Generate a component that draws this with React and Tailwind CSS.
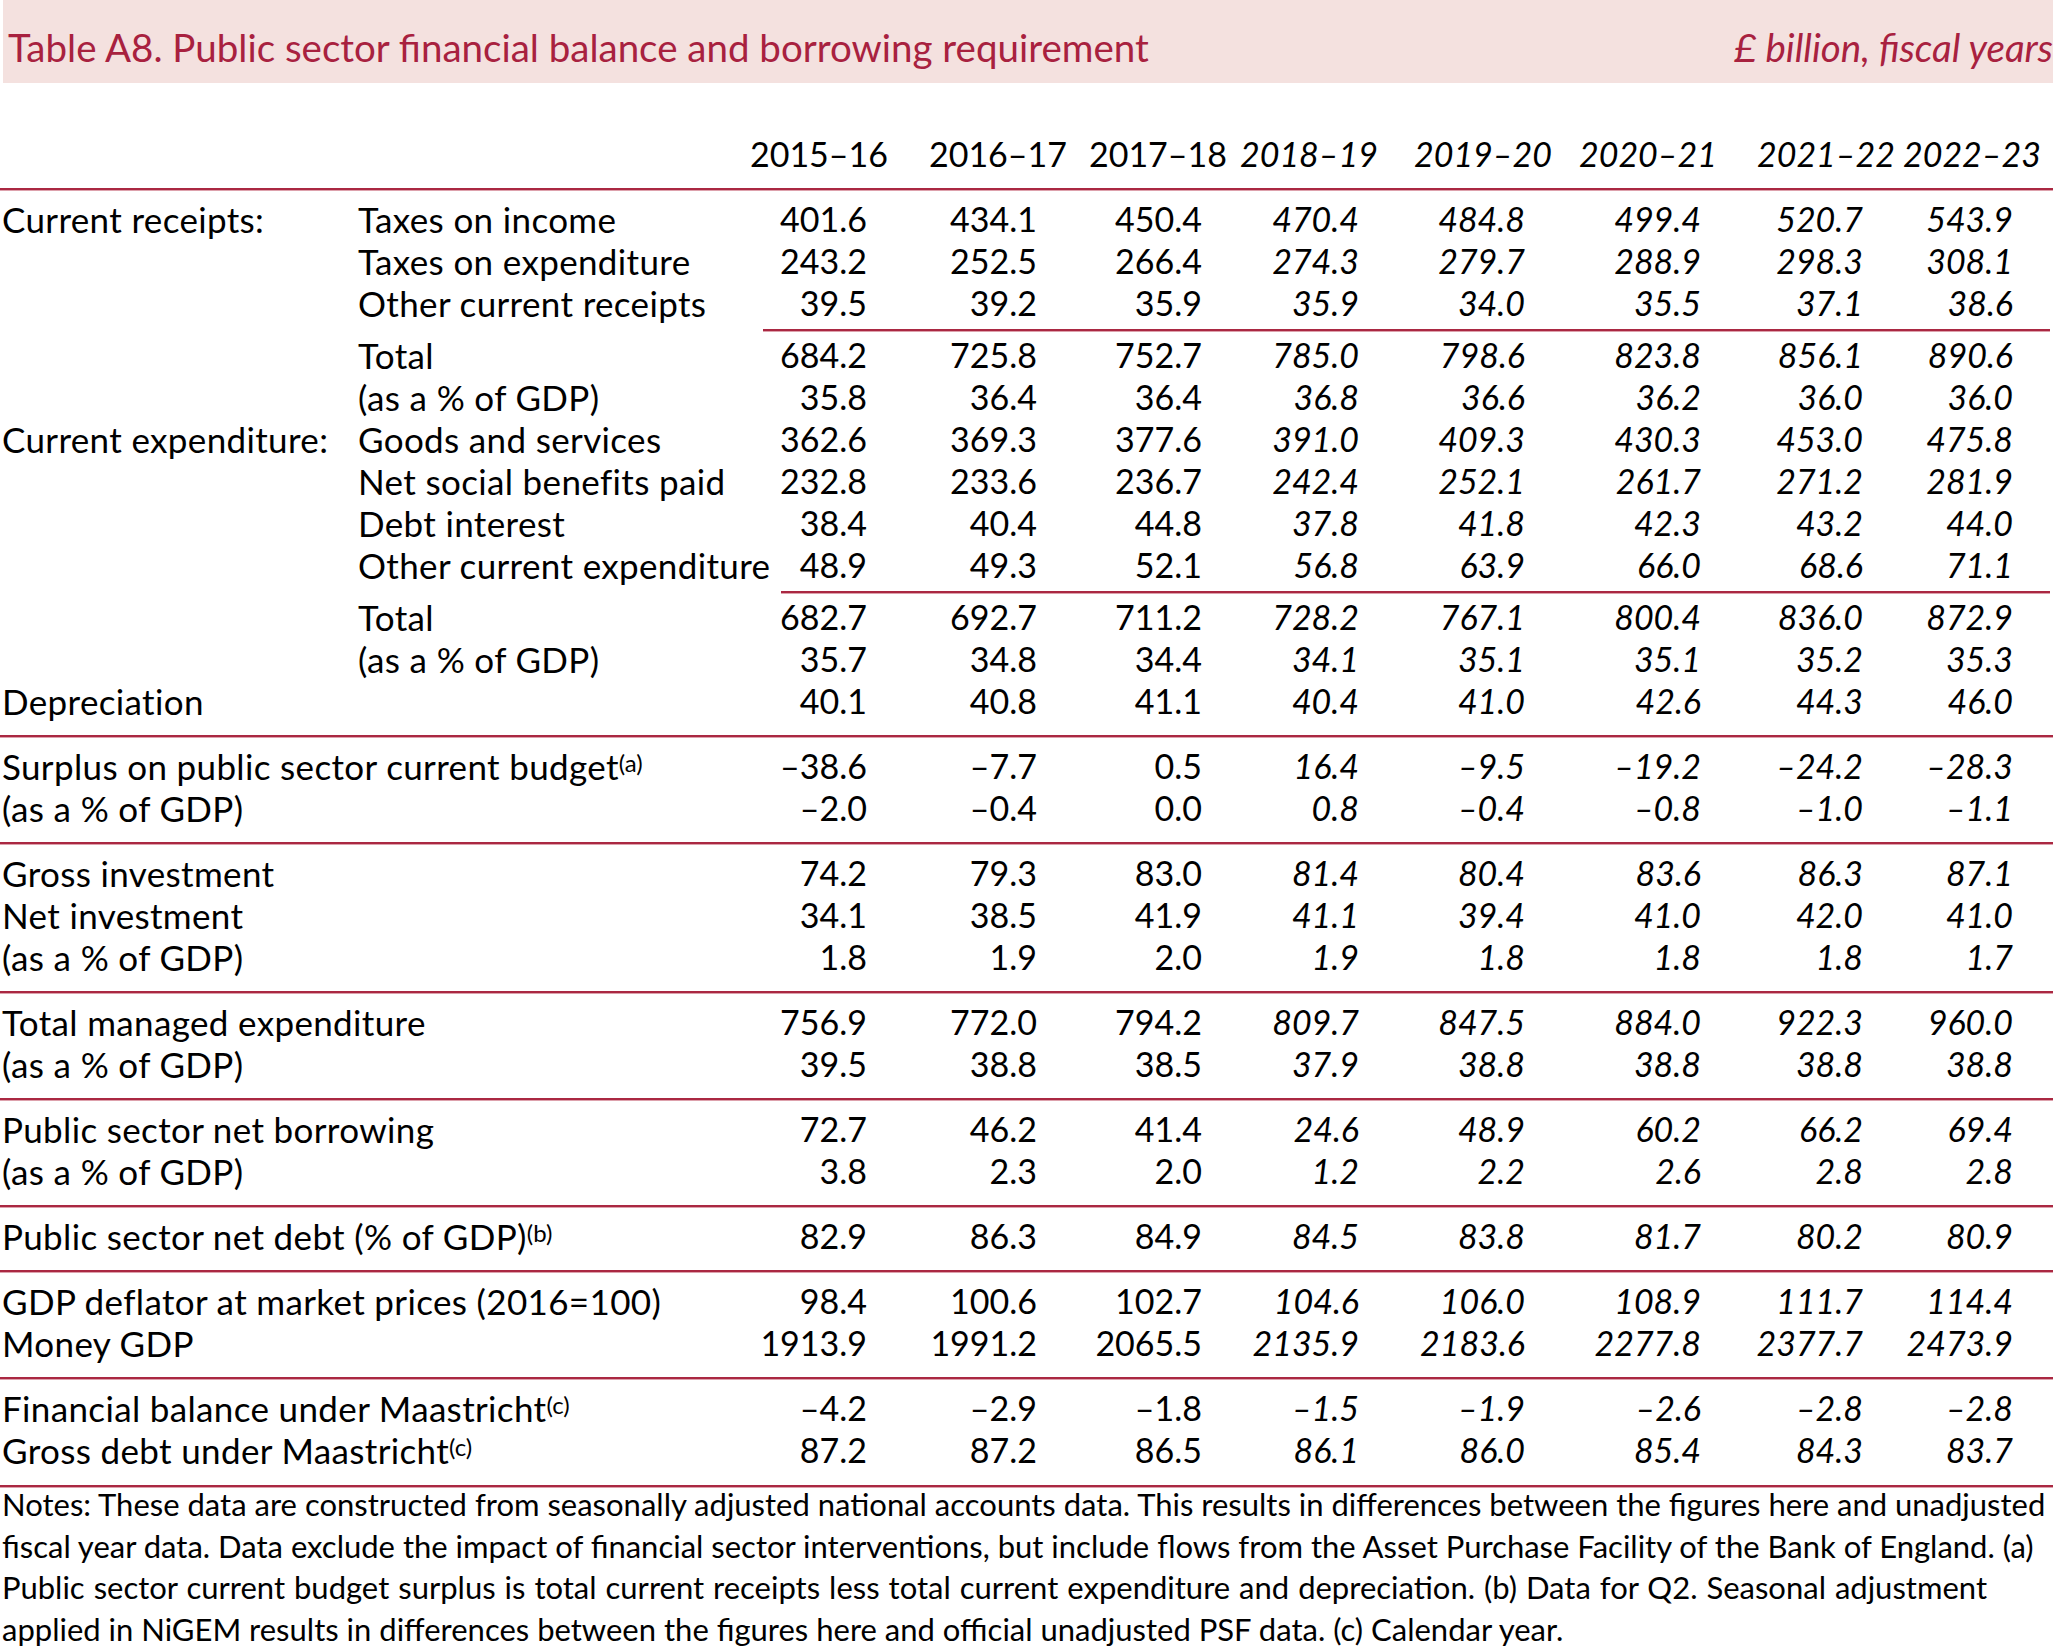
const cols = [
  { hdr: '2015–16', off: '-mr-[21px]', it: false },
  { hdr: '2016–17', off: '-mr-[30px]', it: false },
  { hdr: '2017–18', off: '-mr-[25px]', it: false },
  { hdr: '2018–19', off: '-mr-[19px]', it: true },
  { hdr: '2019–20', off: '-mr-[27px]', it: true },
  { hdr: '2020–21', off: '-mr-[16px]', it: true },
  { hdr: '2021–22', off: '-mr-[32px]', it: true },
  { hdr: '2022–23', off: '-mr-[28px]', it: true },
];

const grid = 'grid grid-cols-[358px_419px_90px_170px_165px_157px_166px_176px_162px_150px] h-[42px] leading-[42px]';
const label = 'whitespace-nowrap text-[35px] tracking-[0.35px]';

const Sup = ({ children }) => (
  <span className="text-[24px] tracking-normal align-[8px] leading-none">{children}</span>
);

const Row = ({ a, b, v }) => (
  <div className={grid}>
    {b !== undefined ? (
      <>
        <div className={`${label} pl-[2px]`}>{a}</div>
        <div className={label}>{b}</div>
      </>
    ) : (
      <div className={`${label} col-span-2 pl-[2px]`}>{a}</div>
    )}
    {v.map((x, i) => (
      <div key={i} className={`flex justify-end whitespace-nowrap ${cols[i].it ? 'italic' : ''}`}>
        {x}
      </div>
    ))}
  </div>
);

// full-width section rule
const Rule = () => (
  <div className="mt-[13px] mb-[7px] border-t-2 border-t-[#aa2842] border-b border-b-[#dda1ac]" />
);

// partial rule under a block of items, above its total
const SubRule = ({ ml }) => (
  <div className={`mt-[5px] mb-[2px] mr-[3px] border-t-2 border-t-[#aa2842] border-b border-b-[#dda1ac] ${ml}`} />
);

const pct = '(as a % of GDP)';

export default function App() {
  return (
    <div className="w-[2053px] h-[1649px] overflow-hidden bg-white text-black font-['Lato','Open_Sans',sans-serif] text-[34px]">
      {/* title band */}
      <div className="ml-[3px] h-[83px] bg-[#f4e1df] flex justify-between pl-[5px] pt-[24px] text-[#a8213f] text-[38.5px] leading-[47px] whitespace-nowrap">
        <div>Table A8. Public sector financial balance and borrowing requirement</div>
        <div className="italic">£ billion, fiscal years</div>
      </div>

      {/* header */}
      <div className={`${grid} mt-[50px]`}>
        <div className="col-span-2" />
        {cols.map((c, i) => (
          <div key={i} className={`flex justify-end whitespace-nowrap ${c.off} ${c.it ? 'italic' : ''}`}>
            {c.hdr}
          </div>
        ))}
      </div>
      <div className="mt-[13px] mb-[7px] border-t-2 border-t-[#aa2842] border-b border-b-[#dda1ac]" />

      <Row a="Current receipts:" b="Taxes on income" v={['401.6', '434.1', '450.4', '470.4', '484.8', '499.4', '520.7', '543.9']} />
      <Row a="" b="Taxes on expenditure" v={['243.2', '252.5', '266.4', '274.3', '279.7', '288.9', '298.3', '308.1']} />
      <Row a="" b="Other current receipts" v={['39.5', '39.2', '35.9', '35.9', '34.0', '35.5', '37.1', '38.6']} />
      <SubRule ml="ml-[763px]" />
      <Row a="" b="Total" v={['684.2', '725.8', '752.7', '785.0', '798.6', '823.8', '856.1', '890.6']} />
      <Row a="" b={pct} v={['35.8', '36.4', '36.4', '36.8', '36.6', '36.2', '36.0', '36.0']} />
      <Row a="Current expenditure:" b="Goods and services" v={['362.6', '369.3', '377.6', '391.0', '409.3', '430.3', '453.0', '475.8']} />
      <Row a="" b="Net social benefits paid" v={['232.8', '233.6', '236.7', '242.4', '252.1', '261.7', '271.2', '281.9']} />
      <Row a="" b="Debt interest" v={['38.4', '40.4', '44.8', '37.8', '41.8', '42.3', '43.2', '44.0']} />
      <Row a="" b="Other current expenditure" v={['48.9', '49.3', '52.1', '56.8', '63.9', '66.0', '68.6', '71.1']} />
      <SubRule ml="ml-[781px]" />
      <Row a="" b="Total" v={['682.7', '692.7', '711.2', '728.2', '767.1', '800.4', '836.0', '872.9']} />
      <Row a="" b={pct} v={['35.7', '34.8', '34.4', '34.1', '35.1', '35.1', '35.2', '35.3']} />
      <Row a="Depreciation" v={['40.1', '40.8', '41.1', '40.4', '41.0', '42.6', '44.3', '46.0']} />
      <Rule />
      <Row a={<>Surplus on public sector current budget<Sup>(a)</Sup></>} v={['–38.6', '–7.7', '0.5', '16.4', '–9.5', '–19.2', '–24.2', '–28.3']} />
      <Row a={pct} v={['–2.0', '–0.4', '0.0', '0.8', '–0.4', '–0.8', '–1.0', '–1.1']} />
      <Rule />
      <Row a="Gross investment" v={['74.2', '79.3', '83.0', '81.4', '80.4', '83.6', '86.3', '87.1']} />
      <Row a="Net investment" v={['34.1', '38.5', '41.9', '41.1', '39.4', '41.0', '42.0', '41.0']} />
      <Row a={pct} v={['1.8', '1.9', '2.0', '1.9', '1.8', '1.8', '1.8', '1.7']} />
      <Rule />
      <Row a="Total managed expenditure" v={['756.9', '772.0', '794.2', '809.7', '847.5', '884.0', '922.3', '960.0']} />
      <Row a={pct} v={['39.5', '38.8', '38.5', '37.9', '38.8', '38.8', '38.8', '38.8']} />
      <Rule />
      <Row a="Public sector net borrowing" v={['72.7', '46.2', '41.4', '24.6', '48.9', '60.2', '66.2', '69.4']} />
      <Row a={pct} v={['3.8', '2.3', '2.0', '1.2', '2.2', '2.6', '2.8', '2.8']} />
      <Rule />
      <Row a={<>Public sector net debt (% of GDP)<Sup>(b)</Sup></>} v={['82.9', '86.3', '84.9', '84.5', '83.8', '81.7', '80.2', '80.9']} />
      <Rule />
      <Row a="GDP deflator at market prices (2016=100)" v={['98.4', '100.6', '102.7', '104.6', '106.0', '108.9', '111.7', '114.4']} />
      <Row a="Money GDP" v={['1913.9', '1991.2', '2065.5', '2135.9', '2183.6', '2277.8', '2377.7', '2473.9']} />
      <Rule />
      <Row a={<>Financial balance under Maastricht<Sup>(c)</Sup></>} v={['–4.2', '–2.9', '–1.8', '–1.5', '–1.9', '–2.6', '–2.8', '–2.8']} />
      <Row a={<>Gross debt under Maastricht<Sup>(c)</Sup></>} v={['87.2', '87.2', '86.5', '86.1', '86.0', '85.4', '84.3', '83.7']} />
      <div className="mt-[14px] border-t-2 border-t-[#aa2842] border-b border-b-[#dda1ac]" />

      {/* notes */}
      <div className="mt-[-4px] pl-[2px] text-[31px] leading-[41.5px] whitespace-nowrap">
        <div className="w-[2040px] text-justify [text-align-last:justify]">
          Notes: These data are constructed from seasonally adjusted national accounts data. This results in differences between the figures here and unadjusted
        </div>
        <div className="w-[2031px] text-justify [text-align-last:justify]">
          fiscal year data. Data exclude the impact of financial sector interventions, but include flows from the Asset Purchase Facility of the Bank of England. (a)
        </div>
        <div className="w-[1985px] text-justify [text-align-last:justify]">
          Public sector current budget surplus is total current receipts less total current expenditure and depreciation. (b) Data for Q2. Seasonal adjustment
        </div>
        <div className="w-[1558px] text-justify [text-align-last:justify]">
          applied in NiGEM results in differences between the figures here and official unadjusted PSF data. (c) Calendar year.
        </div>
      </div>
    </div>
  );
}
